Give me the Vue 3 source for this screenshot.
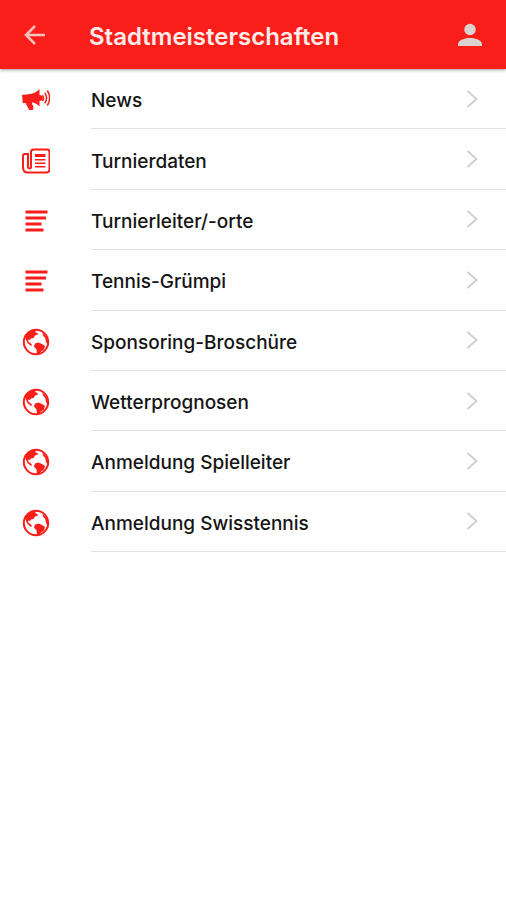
<!-- Menu screen with app bar and a list of sections -->
<template>
  <div class="menu-screen">
    <header class="app-bar">
      <button type="button" class="bar-button" aria-label="Zurück">
        <svg class="icon-back" viewBox="0 0 24 24" aria-hidden="true">
          <path d="M22 12H3.500M12 3L3 12l9 9" />
        </svg>
      </button>
      <h1 class="app-title">Stadtmeisterschaften</h1>
      <button type="button" class="bar-button" aria-label="Profil">
        <svg class="icon-user" viewBox="0 0 24 24" aria-hidden="true">
          <circle cx="12" cy="6.500" r="5.700" />
          <path d="M0 23v-1.500C0 17.300 6 15 12 15s12 2.300 12 6.500V23z" />
        </svg>
      </button>
    </header>

    <nav>
      <ul class="menu-list">
        <li v-for="item in items" :key="item.label">
          <a href="#" class="menu-item">
            <svg class="menu-icon" viewBox="0 0 28 28" aria-hidden="true">
              <g v-if="item.icon === 'news'">
                <path
                  class="fill"
                  d="M0 9L6 8.200C11 8 14.500 6.500 17.500 3v6a3 3 0 0 1 0 6v5.500c-2.500-2.800-5-4-7.500-4.300l.3 2.800 1.200 1-.5 4H7.200L3.500 17H.8z"
                />
                <path class="line" d="M20.500 9.200q2 2.800 0 6" />
                <path class="line" d="M22.800 6.700q3.600 5.300 0 10.600" />
                <path class="line" d="M25.300 4.500q4.700 7.500 0 15" />
              </g>
              <g v-else-if="item.icon === 'paper'">
                <path class="line paper" d="M9 20.500V5q0-2.500 2.500-2.500H25q2.500 0 2.500 2.500v17.500q0 3-3 3H6q-5 0-5-5V9q0-2 2-2h3v12.500q0 2 1.500 2T9 19.500" />
                <path class="line bar" d="M13 8.500h10.500" />
                <path class="line" d="M13 12.700h10.500M13 16.200h10.500M13 19.700h10.500" />
              </g>
              <path v-else-if="item.icon === 'text'" class="line text-lines" d="M3.500 5h22M3.500 11h20.500M3.500 17h16M3.500 23h18" />
              <g v-else>
                <circle class="line globe-ring" cx="14" cy="14" r="12.200" />
                <path
                  class="fill"
                  d="M3 9C5 4.500 9 2 14.500 2.200L13 4l2.500 1 .5 1.500-3 1-1.500 2.500-2.500.5-1 1.500-2-.5.5 2.500 2 1 1.500 2-1 1-3.500-3L4 12z"
                />
                <path class="fill" d="M13 15.500l3.500-1 3.500 1.500 3 2-1 3.500-3.500 2.500-1.500 2.500-2-1-.5-4-2.500-3z" />
                <path class="fill" d="M20.500 4.500l4 4.500 1.500 4v4.500l-2-3.500-.8-4-2.200-2.500z" />
              </g>
            </svg>
            <span class="menu-content">
              <span class="menu-label">{{ item.label }}</span>
              <svg class="chevron" viewBox="0 0 12 20" aria-hidden="true">
                <path d="M1.500 2L10.500 10l-9 8" />
              </svg>
            </span>
          </a>
        </li>
      </ul>
    </nav>
  </div>
</template>

<script setup>
const items = [
  { label: 'News', icon: 'news' },
  { label: 'Turnierdaten', icon: 'paper' },
  { label: 'Turnierleiter/-orte', icon: 'text' },
  { label: 'Tennis-Grümpi', icon: 'text' },
  { label: 'Sponsoring-Broschüre', icon: 'globe' },
  { label: 'Wetterprognosen', icon: 'globe' },
  { label: 'Anmeldung Spielleiter', icon: 'globe' },
  { label: 'Anmeldung Swisstennis', icon: 'globe' }
];
</script>

<style>
body {
  background: #fefefe;
}
</style>

<style scoped>
.menu-screen {
  min-height: 100vh;
  background: #fefefe;
  font-family: Inter, "Liberation Sans", sans-serif;
}

/* App bar */
.app-bar {
  display: flex;
  align-items: center;
  box-sizing: border-box;
  min-height: 69px;
  padding: 0 16px 0 15px;
  background: #f91e19;
  box-shadow: 0 1px 3px rgba(0, 0, 0, 0.4);
}

.bar-button {
  display: flex;
  align-items: center;
  justify-content: center;
  width: 40px;
  height: 40px;
  padding: 0;
  border: 0;
  background: none;
}

.app-title {
  flex: 1;
  margin: 0 0 0 34px;
  padding-top: 4px;
  color: #ffeceb;
  font-size: 24px;
  font-weight: 600;
  line-height: 32px;
}

.icon-back {
  width: 24px;
  height: 24px;
  fill: none;
  stroke: #f9c2bf;
  stroke-width: 2.5;
}

.icon-user {
  width: 24px;
  height: 24px;
  fill: #dad2d0;
}

/* List */
.menu-list {
  display: grid;
  grid-auto-rows: 1fr;
  min-height: 483px;
  margin: 0;
  padding: 0;
  list-style: none;
}

.menu-item {
  display: flex;
  align-items: center;
  height: 100%;
  padding-left: 22px;
  color: #151515;
  text-decoration: none;
}

.menu-icon {
  flex: none;
  width: 28px;
  height: 28px;
  padding-top: 2px;
}

.fill {
  fill: #f91e19;
}

.line {
  fill: none;
  stroke: #f91e19;
  stroke-width: 1.5;
}

.paper {
  stroke-width: 2;
}

.bar {
  stroke-width: 3;
}

.text-lines {
  stroke-width: 3;
}

.globe-ring {
  stroke-width: 2;
}

.menu-content {
  display: flex;
  flex: 1;
  align-items: center;
  justify-content: space-between;
  box-sizing: border-box;
  height: 100%;
  margin-left: 41px;
  padding-right: 28px;
  border-bottom: 1px solid #e2e2e2;
}

.menu-label {
  padding-top: 5px;
  font-size: 19px;
  font-weight: 500;
  line-height: 24px;
}

.chevron {
  width: 12px;
  height: 20px;
  fill: none;
  stroke: #d0d0d0;
  stroke-width: 2;
}
</style>
